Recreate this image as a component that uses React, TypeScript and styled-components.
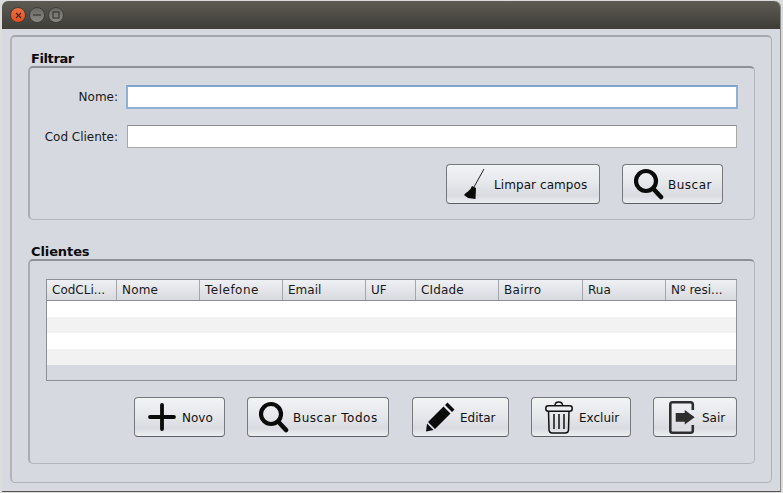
import React, {FC, ReactNode} from "react";
import styled, {createGlobalStyle} from "styled-components";

const GlobalStyle = createGlobalStyle`
  html, body {
    margin: 0;
    padding: 0;
    background: #dcdcdc;
    overflow: hidden;
  }
  body {
    font-family: "DejaVu Sans", sans-serif;
    font-size: 12px;
    color: #111;
  }
`;

const Win = styled.div`
  width: 779px;
  height: 491px;
  margin: 1px 0 0 2px;
  display: flex;
  flex-direction: column;
  background: #d6d9e0;
  border-right: 1px solid #8d8d8d;
  border-bottom: 1px solid #55534c;
  border-radius: 6px 6px 0 0;
  box-sizing: border-box;
`;

const TitleBar = styled.div`
  height: 28px;
  flex: none;
  display: flex;
  align-items: center;
  gap: 3px;
  padding-left: 8px;
  border-radius: 6px 6px 0 0;
  background: linear-gradient(#5d5b53, #3e3d38);
`;

const WinBtn = styled.div<{$close?: boolean}>`
  width: 16px;
  height: 16px;
  box-sizing: border-box;
  border-radius: 50%;
  display: flex;
  align-items: center;
  justify-content: center;
  background: ${p => p.$close ? "linear-gradient(#ee7044, #e0511f)" : "linear-gradient(#6a6963, #8a8982)"};
  border: 1px solid #403f39;
`;

const Body = styled.div`
  flex: 1;
  padding: 6px 8px 9px 8px;
  display: flex;
`;

const OuterFrame = styled.div`
  flex: 1;
  box-sizing: border-box;
  border: 1px solid #b0b2b8;
  border-top: 2px solid #a6a8ae;
  border-left: 2px solid #b2b4ba;
  border-radius: 5px;
  padding: 14px 16px 18px 16px;
  display: flex;
  flex-direction: column;
`;

const Section = styled.section<{$height: number; $mt?: number}>`
  height: ${p => p.$height}px;
  margin-top: ${p => p.$mt ?? 0}px;
  display: flex;
  flex-direction: column;
  flex: none;
`;

const SectionTitle = styled.div<{$ls: number}>`
  height: 15px;
  line-height: 16px;
  padding-left: 3px;
  font-size: 13px;
  font-weight: bold;
  letter-spacing: ${p => p.$ls}px;
  color: #0c0c0c;
`;

const Panel = styled.div`
  flex: 1;
  box-sizing: border-box;
  border: 1px solid #b4b6bc;
  border-top: 2px solid #8f9196;
  border-left: 2px solid #a9abb1;
  border-radius: 5px;
  display: flex;
  flex-direction: column;
`;

const FilterPanel = styled(Panel)`
  padding: 17px 17px 0 0;
`;

const ClientPanel = styled(Panel)`
  padding: 18px 16px 0 16px;
`;

const FieldRow = styled.div<{$mt?: number}>`
  display: flex;
  align-items: center;
  margin-top: ${p => p.$mt ?? 0}px;
`;

const FieldLabel = styled.label`
  width: 88px;
  flex: none;
  text-align: right;
  margin-right: 9px;
  font-size: 12px;
  color: #1a1a1a;
`;

const Field = styled.div<{$focus?: boolean}>`
  flex: 1;
  box-sizing: border-box;
  background: #fff;
  height: ${p => p.$focus ? 24 : 23}px;
  margin: ${p => p.$focus ? "0 -1px 0 -1px" : 0};
  border: ${p => p.$focus ? "2px solid #8fb0d2" : "1px solid #a8a8a8"};
  border-top-color: ${p => p.$focus ? "#7ea4cc" : "#8e8e8e"};
`;

const ButtonRow = styled.div<{$mt: number; $pr: number}>`
  display: flex;
  justify-content: flex-end;
  margin-top: ${p => p.$mt}px;
  padding-right: ${p => p.$pr}px;
`;

const Btn = styled.button<{$w: number; $ml: number; $pl: number; $ls: number}>`
  width: ${p => p.$w}px;
  height: 40px;
  margin-left: ${p => p.$ml}px;
  padding: 1px 0 0 ${p => p.$pl}px;
  box-sizing: border-box;
  display: flex;
  align-items: center;
  justify-content: flex-start;
  font-family: "DejaVu Sans", sans-serif;
  font-size: 12px;
  letter-spacing: ${p => p.$ls}px;
  white-space: nowrap;
  color: #111;
  border: 1px solid #77797e;
  border-bottom-color: #5f6166;
  border-radius: 4px;
  background: linear-gradient(#f2f3f5 0%, #e6e8ec 45%, #d9dbe1 80%, #eceef1 100%);
`;

const Grid = styled.div`
  box-sizing: border-box;
  width: 691px;
  height: 102px;
  border: 1px solid #8e9097;
  display: flex;
  flex-direction: column;
`;

const HeaderRow = styled.div`
  height: 21px;
  flex: none;
  box-sizing: border-box;
  display: flex;
  border-bottom: 1px solid #8e9097;
  background: linear-gradient(#eff0f3, #d8dae0);
`;

const HeaderCell = styled.div<{$w: number; $ls: number}>`
  width: ${p => p.$w}px;
  flex: none;
  box-sizing: border-box;
  padding-left: 5px;
  line-height: 20px;
  font-size: 12px;
  letter-spacing: ${p => p.$ls}px;
  color: #1a1a1a;
  white-space: nowrap;
  border-right: 1px solid #a4a6ac;
`;

const GridRow = styled.div<{$odd: boolean}>`
  height: 16px;
  flex: none;
  background: ${p => p.$odd ? "#f2f2f2" : "#ffffff"};
`;

const Icon = styled.svg<{$mr: number}>`
  margin-right: ${p => p.$mr}px;
  margin-top: -1px;
  flex: none;
`;

const SearchIcon: FC = () => (
  <Icon $mr={4} width="30" height="32" viewBox="0 0 30 32">
    <circle cx="12" cy="13" r="10" fill="none" stroke="#0a0a0a" strokeWidth="4.2" />
    <path d="M19.5 21 L27 29" stroke="#0a0a0a" strokeWidth="4.6" strokeLinecap="round" />
  </Icon>
);

const columns: {name: string; w: number; ls: number}[] = [
  {name: "CodCLi...", w: 70, ls: 0},
  {name: "Nome", w: 83, ls: 0.2},
  {name: "Telefone", w: 83, ls: 0.5},
  {name: "Email", w: 83, ls: 0},
  {name: "UF", w: 50, ls: 0},
  {name: "CIdade", w: 83, ls: 0.15},
  {name: "Bairro", w: 84, ls: 0.3},
  {name: "Rua", w: 83, ls: 0},
  {name: "Nº resi...", w: 71, ls: 0},
];

const ToolButton: FC<{w: number; ml: number; pl: number; ls?: number; icon: ReactNode; text: string}> = ({w, ml, pl, ls = 0, icon, text}) => (
  <Btn $w={w} $ml={ml} $pl={pl} $ls={ls}>{icon}<span>{text}</span></Btn>
);

const App: FC = () => {
  return <>
    <GlobalStyle />
    <Win>
      <TitleBar>
        <WinBtn $close>
          <svg width="7" height="7" viewBox="0 0 7 7"><path d="M1 1L6 6M6 1L1 6" stroke="#4a2010" strokeWidth="1.1" /></svg>
        </WinBtn>
        <WinBtn>
          <svg width="8" height="2" viewBox="0 0 8 2"><path d="M0 1H8" stroke="#37362f" strokeWidth="1.2" /></svg>
        </WinBtn>
        <WinBtn>
          <svg width="8" height="8" viewBox="0 0 8 8"><rect x="1" y="1" width="6" height="6" fill="none" stroke="#37362f" strokeWidth="1.1" /></svg>
        </WinBtn>
      </TitleBar>
      <Body>
        <OuterFrame>
          <Section $height={169}>
            <SectionTitle $ls={-0.4}>Filtrar</SectionTitle>
            <FilterPanel>
              <FieldRow>
                <FieldLabel>Nome:</FieldLabel>
                <Field $focus />
              </FieldRow>
              <FieldRow $mt={16}>
                <FieldLabel>Cod Cliente:</FieldLabel>
                <Field />
              </FieldRow>
              <ButtonRow $mt={16} $pr={14}>
                <ToolButton w={154} ml={0} pl={17} text="Limpar campos" ls={0.08} icon={
                  <Icon $mr={9} width="21" height="34" viewBox="0 0 21 34">
                    <path d="M20 2 L10 20" stroke="#222" strokeWidth="1" />
                    <path d="M8 19 L12 21 L11.5 32 L4 31 L0 28 Q1 26 4 24.5 Q7 22 8 19Z" fill="#0a0a0a" />
                  </Icon>
                } />
                <ToolButton w={101} ml={22} pl={11} text="Buscar" ls={0.5} icon={<SearchIcon />} />
              </ButtonRow>
            </FilterPanel>
          </Section>
          <Section $height={220} $mt={24}>
            <SectionTitle $ls={-0.1}>Clientes</SectionTitle>
            <ClientPanel>
              <Grid>
                <HeaderRow>
                  {columns.map(c => <HeaderCell key={c.name} $w={c.w} $ls={c.ls}>{c.name}</HeaderCell>)}
                </HeaderRow>
                {[0, 1, 2, 3].map(i => <GridRow key={i} $odd={i % 2 === 1} />)}
              </Grid>
              <ButtonRow $mt={16} $pr={1}>
                <ToolButton w={91} ml={0} pl={13} text="Novo" icon={
                  <Icon $mr={6} width="28" height="28" viewBox="0 0 28 28">
                    <path d="M14 2V26M2 14H26" stroke="#0a0a0a" strokeWidth="3.8" strokeLinecap="round" />
                  </Icon>
                } />
                <ToolButton w={142} ml={22} pl={11} text="Buscar Todos" ls={0.5} icon={<SearchIcon />} />
                <ToolButton w={97} ml={23} pl={13} text="Editar" icon={
                  <Icon $mr={5} width="29" height="30" viewBox="0 0 29 30">
                    <path d="M21.5 0.5 L28.5 7.5 L26 10 L19 3 Z M17.5 4.5 L24.5 11.5 L9 27 L2 20 Z" fill="#0a0a0a" />
                    <path d="M1 21.5 L7.5 28 L0 29.5 Z" fill="#0a0a0a" />
                  </Icon>
                } />
                <ToolButton w={100} ml={22} pl={13} text="Excluir" icon={
                  <Icon $mr={6} width="28" height="33" viewBox="0 0 28 33">
                    <path d="M10 4.5 Q10 1 13.7 1 Q17.5 1 17.5 4.5" fill="none" stroke="#111" strokeWidth="1.5" />
                    <rect x="0.8" y="4.7" width="26.4" height="5.6" rx="2.5" fill="none" stroke="#111" strokeWidth="1.5" />
                    <path d="M3.5 10 L4 28.5 Q4 32 7.5 32 H20 Q23.5 32 23.5 28.5 L24 10" fill="none" stroke="#111" strokeWidth="1.5" />
                    <path d="M9 13V28M14 13V28M19 13V28" stroke="#111" strokeWidth="1.5" />
                  </Icon>
                } />
                <ToolButton w={84} ml={22} pl={15} text="Sair" icon={
                  <Icon $mr={7} width="26" height="33" viewBox="0 0 26 33">
                    <path d="M23.8 9 V3.5 Q23.8 1.3 21.5 1.3 H3.5 Q1.3 1.3 1.3 3.5 V29.5 Q1.3 31.7 3.5 31.7 H21.5 Q23.8 31.7 23.8 29.5 V24" fill="none" stroke="#2e2e2e" strokeWidth="2.6" />
                    <path d="M6.7 12 H15.7 V9 L25.7 16.2 L15.7 23.4 V20.7 H6.7 Z" fill="#2e2e2e" />
                  </Icon>
                } />
              </ButtonRow>
            </ClientPanel>
          </Section>
        </OuterFrame>
      </Body>
    </Win>
  </>;
};

export default App;
